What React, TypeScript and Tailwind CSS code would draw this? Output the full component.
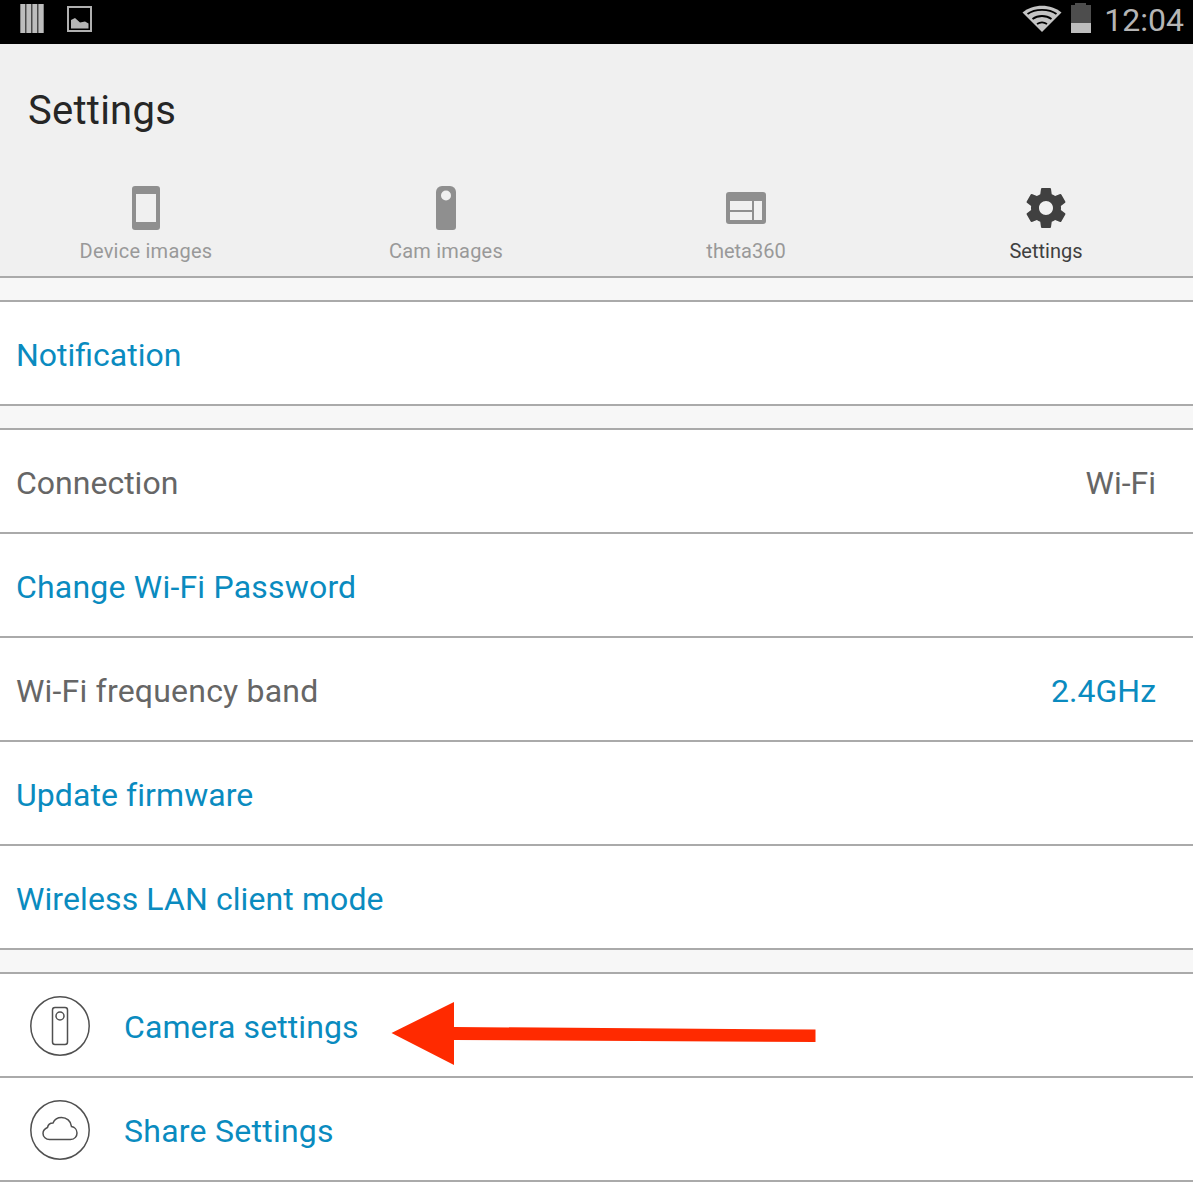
import { ReactNode } from "react";

const BLUE = "text-[#0a8bbf]";
const GRAY = "text-[#666666]";

// status bar glyphs
function StatusLeft() {
  return (
    <div className="flex items-start gap-[23px]">
      <svg width="24" height="29" viewBox="0 0 24 29" className="mt-[4px]">
        <rect x="0" y="0" width="24" height="29" fill="#4a4a4a" />
        <rect x="0.500" y="0" width="4.500" height="29" fill="#bdbdbd" />
        <rect x="6.500" y="0" width="4.500" height="29" fill="#bdbdbd" />
        <rect x="12.500" y="0" width="4.500" height="29" fill="#bdbdbd" />
        <rect x="18.500" y="0" width="5" height="29" fill="#bdbdbd" />
      </svg>
      <svg width="25" height="26" viewBox="0 0 25 26" className="mt-[6px]">
        <rect x="1" y="1" width="23" height="24" fill="none" stroke="#b0b0b0" strokeWidth="2" />
        <path d="M4 22.500V14L8 12L13 16.500L18 15.500L21.500 17.500V22.500Z" fill="#b5b5b5" />
      </svg>
    </div>
  );
}

function StatusRight() {
  return (
    <div className="flex items-start">
      <svg width="40" height="28" viewBox="0 0 40 28" className="mt-[4px] mr-[9px]">
        <path d="M20 28L0.500 8.500C11 -0.500 29 -0.500 39.500 8.500Z" fill="#c4c4c4" />
        <path d="M5.500 10C13 4.500 27 4.500 34.500 10" fill="none" stroke="#000" strokeWidth="1.800" />
        <path d="M10.500 15C16 11 24 11 29.500 15" fill="none" stroke="#000" strokeWidth="1.800" />
        <path d="M15 20C18 18 22 18 25 20" fill="none" stroke="#000" strokeWidth="1.800" />
      </svg>
      <svg width="20" height="30" viewBox="0 0 20 30" className="mt-[3px] mr-[13px]">
        <rect x="4" y="0" width="11" height="3" fill="#4d4d4d" />
        <rect x="0" y="2" width="20" height="18" fill="#4d4d4d" />
        <rect x="0" y="20" width="20" height="10" fill="#bdbdbd" />
      </svg>
      <span className="text-[32px] leading-[41px] text-[#b5b5b5]">12:04</span>
    </div>
  );
}

// tab icons
function DeviceIcon() {
  return (
    <svg width="28" height="44" viewBox="0 0 28 44">
      <rect width="28" height="44" rx="3" fill="#8f8f8f" />
      <rect x="4" y="8" width="20" height="28" fill="#f0f0f0" />
    </svg>
  );
}

function CamIcon() {
  return (
    <svg width="20" height="44" viewBox="0 0 20 44">
      <path d="M0 6a6 6 0 0 1 6-6H14a6 6 0 0 1 6 6V41a3 3 0 0 1-3 3H3a3 3 0 0 1-3-3Z" fill="#8f8f8f" />
      <circle cx="10" cy="9.500" r="5" fill="#f0f0f0" />
    </svg>
  );
}

function ThetaIcon() {
  return (
    <svg width="40" height="32" viewBox="0 0 40 32">
      <rect width="40" height="32" rx="3" fill="#8f8f8f" />
      <rect x="4" y="9" width="22" height="9" fill="#f0f0f0" />
      <rect x="4" y="20" width="22" height="8" fill="#f0f0f0" />
      <rect x="28" y="9" width="8" height="19" fill="#f0f0f0" />
    </svg>
  );
}

function GearIcon() {
  return (
    <svg width="40" height="40" viewBox="2 2 20 20">
      <path
        fill="#404040"
        d="M19.430 12.980c.04-.32.07-.64.07-.98s-.03-.66-.07-.98l2.110-1.650c.19-.15.24-.42.12-.64l-2-3.460c-.12-.22-.39-.3-.61-.22l-2.490 1c-.52-.4-1.080-.73-1.690-.98l-.38-2.650C14.460 2.180 14.250 2 14 2h-4c-.25 0-.46.18-.49.42l-.38 2.650c-.61.25-1.170.59-1.690.98l-2.490-1c-.23-.09-.49 0-.61.22l-2 3.460c-.13.22-.07.49.12.64l2.110 1.650c-.04.32-.07.65-.07.98s.03.66.07.98l-2.110 1.650c-.19.15-.24.42-.12.64l2 3.460c.12.22.39.3.61.22l2.490-1c.52.4 1.080.73 1.690.98l.38 2.650c.03.24.24.42.49.42h4c.25 0 .46-.18.49-.42l.38-2.650c.61-.25 1.170-.59 1.690-.98l2.490 1c.23.09.49 0 .61-.22l2-3.460c.12-.22.07-.49-.12-.64l-2.110-1.650zM12 15.500c-1.930 0-3.500-1.570-3.500-3.500s1.570-3.500 3.500-3.500 3.500 1.570 3.500 3.500-1.570 3.500-3.500 3.500z"
      />
    </svg>
  );
}

function Tab({ icon, label, active, className }: { icon: ReactNode; label: string; active?: boolean; className?: string }) {
  return (
    <div className="flex-1 flex flex-col items-center">
      <div className="h-[44px] flex items-center justify-center">{icon}</div>
      <span className={`mt-[9px] text-[20px] leading-[24px] ${className} ${active ? "text-[#404040]" : "text-[#999999]"}`}>
        {label}
      </span>
    </div>
  );
}

function Spacer() {
  return <div className="h-[24px] bg-[#f7f7f7] border-b-2 border-[#aaaaaa]" />;
}

function Row({ children, right }: { children: ReactNode; right?: ReactNode }) {
  return (
    <div className="h-[104px] pt-[4px] bg-white border-b-2 border-[#aaaaaa] flex items-center justify-between pl-[16px] pr-[37px] text-[32px]">
      {children}
      {right}
    </div>
  );
}

function CircleCamIcon() {
  return (
    <svg width="60" height="60" viewBox="0 0 60 60" fill="none" stroke="#505050" strokeWidth="1.500">
      <circle cx="30" cy="30" r="29.200" />
      <rect x="22.500" y="11.500" width="15" height="37" rx="2.500" />
      <circle cx="30" cy="20" r="4" />
    </svg>
  );
}

function CircleCloudIcon() {
  return (
    <svg width="60" height="60" viewBox="0 0 60 60" fill="none" stroke="#505050" strokeWidth="1.500">
      <circle cx="30" cy="30" r="29.200" />
      <path d="M19.500 39.500H40.500C45 39.500 47 36 47 33C47 29.500 44.500 27 41.500 26.500C41 21 36.500 17.500 31.500 17.500C27.500 17.500 24.500 19.500 23 23C20 23 18 25 17.500 27.500C15 28.500 13 30.500 13 33.500C13 37 16 39.500 19.500 39.500Z" />
    </svg>
  );
}

function IconRow({ icon, label, className }: { icon: ReactNode; label: string; className: string }) {
  return (
    <div className="h-[104px] pt-[2px] bg-white border-b-2 border-[#aaaaaa] flex items-center pl-[30px] text-[32px]">
      {icon}
      <span className={`ml-[34px] pt-[2px] ${className} ${BLUE}`}>{label}</span>
    </div>
  );
}

export default function App() {
  return (
    <div className="relative w-[1193px] h-[1183px] overflow-hidden bg-white font-['Roboto',sans-serif]">
      <div className="h-[44px] bg-black flex items-start justify-between pl-[20px] pr-[9px]">
        <StatusLeft />
        <StatusRight />
      </div>

      <div className="h-[234px] bg-[#f0f0f0] border-b-2 border-[#aaaaaa]">
        <h1 className="pl-[28px] pt-[43px] text-[40px] leading-[48px] tracking-[0.25px] text-[#262626]">Settings</h1>
        <div className="flex w-[1200px] -ml-[4px] mt-[52px] -translate-y-[1px]">
          <Tab icon={<DeviceIcon />} label="Device images" className="tracking-[0.25px]" />
          <Tab icon={<CamIcon />} label="Cam images" className="tracking-[0.2px]" />
          <Tab icon={<ThetaIcon />} label="theta360" className="tracking-[0px]" />
          <Tab icon={<GearIcon />} label="Settings" active className="tracking-[0px]" />
        </div>
      </div>

      <Spacer />
      <Row>
        <span className={`${BLUE} tracking-[0px]`}>Notification</span>
      </Row>
      <Spacer />
      <Row right={<span className={GRAY}>Wi-Fi</span>}>
        <span className={`${GRAY} tracking-[0px]`}>Connection</span>
      </Row>
      <Row>
        <span className={`${BLUE} tracking-[0.2px]`}>Change Wi-Fi Password</span>
      </Row>
      <Row right={<span className={BLUE}>2.4GHz</span>}>
        <span className={`${GRAY} tracking-[0.2px]`}>Wi-Fi frequency band</span>
      </Row>
      <Row>
        <span className={`${BLUE} tracking-[0.07px]`}>Update firmware</span>
      </Row>
      <Row>
        <span className={`${BLUE} tracking-[0.1px]`}>Wireless LAN client mode</span>
      </Row>
      <Spacer />
      <IconRow icon={<CircleCamIcon />} label="Camera settings" className="tracking-[0.1px]" />
      <IconRow icon={<CircleCloudIcon />} label="Share Settings" className="tracking-[0.25px]" />

      {/* red annotation arrow over the list */}
      <svg width="430" height="70" viewBox="0 0 430 70" className="absolute left-[390px] top-[1000px]">
        <path d="M1.500 33L64 2V27L425.500 29.500V42L64 40V65Z" fill="#ff2a00" />
      </svg>
    </div>
  );
}
